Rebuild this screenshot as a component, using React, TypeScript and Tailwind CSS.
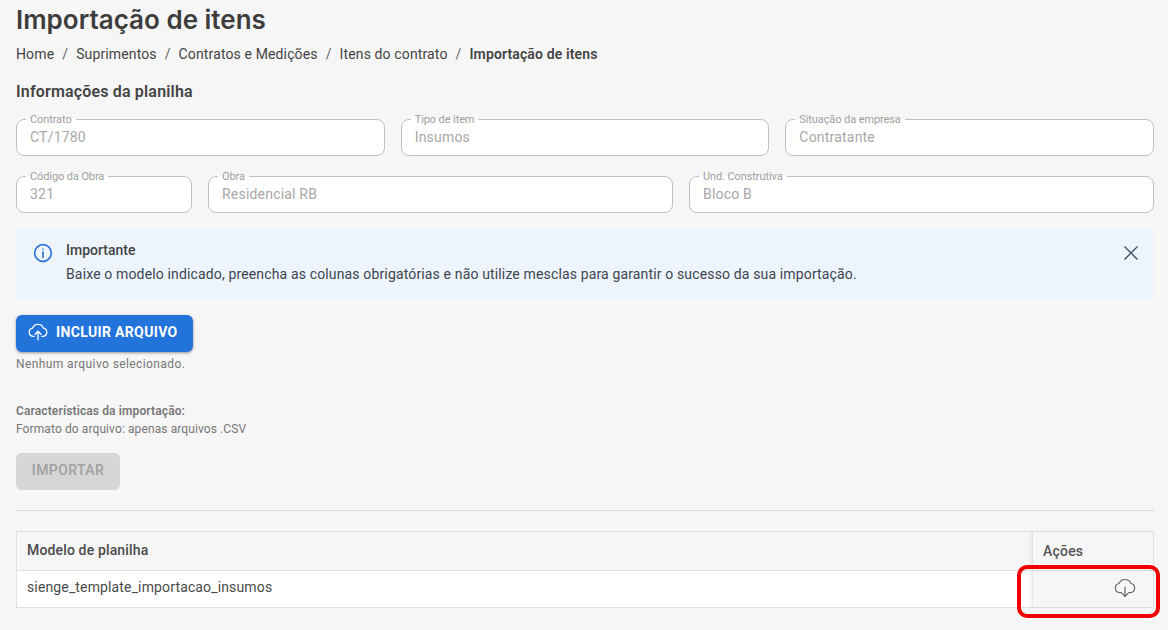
function Field({ label, value, className }: { label: string; value: string; className: string }) {
  return (
    <fieldset className={`h-[42px] min-w-0 rounded-[8px] border border-[#c0c0c0] bg-white px-[13px] ${className}`}>
      <legend className="ml-[-4px] px-[4px] text-[11px] leading-[11px] tracking-[-0.1px] text-[#9e9e9e]">{label}</legend>
      <div className="mt-[2px] text-[14px] leading-[20px] tracking-[0.2px] text-[#a8a8a8]">{value}</div>
    </fieldset>
  );
}

export default function App() {
  return (
    <div className="relative h-[630px] w-[1168px] overflow-hidden bg-[#f6f6f6] pl-4 pr-[14px] font-['Roboto',sans-serif] text-[#3f3f3f]">
      <h1 className="mt-[4px] font-['Inter',sans-serif] text-[26px] leading-[32px] font-semibold text-[#3d3d3d]">Importação de itens</h1>

      <nav className="mt-[8px] flex h-[20px] items-center text-[14px] leading-[20px] tracking-[0.13px] text-[#444]">
        <span>Home</span>
        <span className="mx-[8px] text-[#666]">/</span>
        <span>Suprimentos</span>
        <span className="mx-[8px] text-[#666]">/</span>
        <span>Contratos e Medições</span>
        <span className="mx-[8px] text-[#666]">/</span>
        <span>Itens do contrato</span>
        <span className="mx-[8px] text-[#666]">/</span>
        <span className="font-semibold">Importação de itens</span>
      </nav>

      <h2 className="mt-[16px] text-[16px] leading-[24px] font-semibold tracking-[0.17px] text-[#444]">Informações da planilha</h2>

      <div className="mt-[10px] flex gap-4">
        <Field label="Contrato" value="CT/1780" className="flex-1" />
        <Field label="Tipo de item" value="Insumos" className="flex-1" />
        <Field label="Situação da empresa" value="Contratante" className="flex-1" />
      </div>
      <div className="mt-[15px] flex gap-4">
        <Field label="Código da Obra" value="321" className="w-[176px]" />
        <Field label="Obra" value="Residencial RB" className="flex-1" />
        <Field label="Und. Construtiva" value="Bloco B" className="flex-1" />
      </div>

      <div className="mt-[16px] flex h-[70px] items-start rounded-[4px] bg-[#edf4fc] pl-[17px] pr-[15px] pt-[11px]">
        <svg className="mt-[3px] shrink-0" width="20" height="20" viewBox="0 0 24 24" fill="none" stroke="#2a74d8" strokeWidth="2" strokeLinecap="round">
          <circle cx="12" cy="12" r="10" />
          <path d="M12 11v6" />
          <path d="M12 7.5v.1" />
        </svg>
        <div className="ml-[13px] flex-1">
          <div className="text-[14px] leading-[20px] font-medium text-[#444]">Importante</div>
          <div className="mt-[4px] text-[14px] leading-[20px] tracking-[0.145px] text-[#3d4550]">
            Baixe o modelo indicado, preencha as colunas obrigatórias e não utilize mesclas para garantir o sucesso da sua importação.
          </div>
        </div>
        <svg className="mt-[5px] shrink-0" width="16" height="16" viewBox="0 0 16 16" fill="none" stroke="#3c5068" strokeWidth="1.4">
          <path d="M1.5 1.5l13 13M14.5 1.5l-13 13" />
        </svg>
      </div>

      <button className="mt-[16px] flex h-[37px] w-[177px] items-center rounded-[6px] bg-[#2273da] pb-[2px] pl-[12px] text-[14px] font-bold tracking-[0.35px] text-white shadow-[0_1px_3px_rgba(0,0,0,0.4)]">
        <svg width="20" height="20" viewBox="0 0 24 24" fill="none" stroke="white" strokeWidth="1.6" strokeLinecap="round" strokeLinejoin="round">
          <path d="M7.5 16H6.5A5 5 0 0 1 5.5 6.1 7 7 0 0 1 18.5 6.1 5 5 0 0 1 17.5 16H16.5" />
          <path d="M12 20V10" />
          <path d="M8.5 13.5L12 10L15.5 13.5" />
        </svg>
        <span className="ml-[8px]">INCLUIR ARQUIVO</span>
      </button>
      <p className="mt-[3px] text-[12px] leading-[18px] tracking-[0.4px] text-[#777]">Nenhum arquivo selecionado.</p>

      <p className="mt-[29px] text-[12px] leading-[18px] font-semibold tracking-[0.12px] text-[#777]">Características da importação:</p>
      <p className="text-[12px] leading-[18px] tracking-[0.1px] text-[#777]">Formato do arquivo: apenas arquivos .CSV</p>

      <button disabled className="mt-[15px] block h-[37px] w-[104px] rounded-[6px] bg-[#d6d6d6] pb-[2px] text-[14px] font-medium tracking-[0.4px] text-[#a0a0a0]">IMPORTAR</button>

      <hr className="mt-[20px] border-t border-[#dcdcdc]" />

      <div className="mt-[20px] h-[77px] border border-[#e0e0e0] text-[14px]">
        <div className="flex h-[39px] border-b border-[#e0e0e0]">
          <div className="flex flex-1 items-center px-[10px] pb-[2px] font-medium tracking-[0.15px] text-[#4a4a4a]">Modelo de planilha</div>
          <div className="flex w-[121px] items-center border-l border-[#e0e0e0] pl-[10px] font-medium tracking-[0.2px] text-[#555] shadow-[-2px_0_3px_rgba(0,0,0,0.05)]">Ações</div>
        </div>
        <div className="flex h-[36px]">
          <div className="flex flex-1 items-center bg-white px-[10px] pb-[3px] tracking-[0.14px] text-[#4a4a4a]">sienge_template_importacao_insumos</div>
          <div className="flex w-[121px] items-center justify-end border-l border-[#e8e8e8] pb-[3px] pr-[17px] shadow-[-2px_0_3px_rgba(0,0,0,0.05)]">
            <svg width="22" height="22" viewBox="0 0 24 24" fill="none" stroke="#666" strokeWidth="1.3" strokeLinecap="round" strokeLinejoin="round">
              <path d="M8 17H6.5A5 5 0 0 1 5.5 7.1 7 7 0 0 1 18.5 7.1 5 5 0 0 1 17.5 17H16" />
              <path d="M12 11V21" />
              <path d="M8.8 17.8L12 21L15.2 17.8" />
            </svg>
          </div>
        </div>
      </div>

      <div className="absolute left-[1017px] top-[565px] h-[53px] w-[143px] rounded-[10px] border-[4px] border-[#f00000]" />
    </div>
  );
}
